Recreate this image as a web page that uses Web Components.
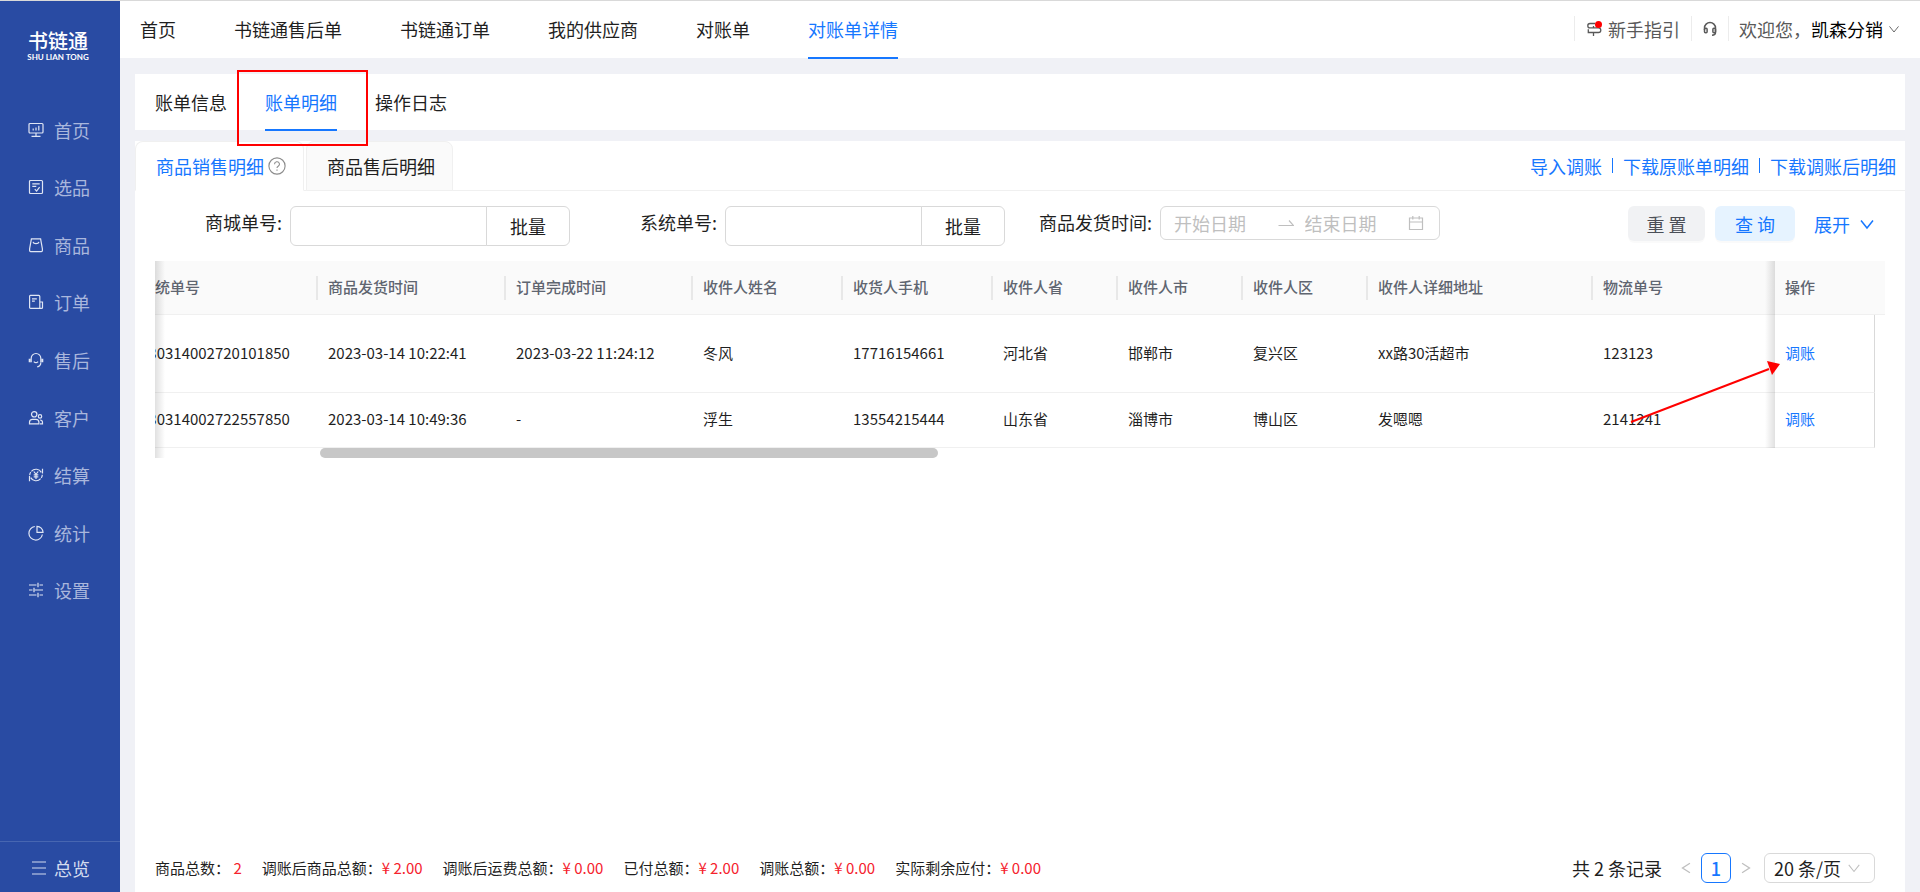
<!DOCTYPE html>
<html lang="zh-CN">
<head>
<meta charset="utf-8">
<title>书链通 - 对账单详情</title>
<style>
  :root { --blue: #1677ff; --ink: #1f1f1f; --line: #d9d9d9; --soft: #f0f0f0; --page: #f0f1f6; --side: #294ba3; }
  body { margin: 0; font-family: "Noto Sans CJK SC", "Noto Sans", sans-serif; font-size: 18px; line-height: 24px; color: var(--ink); }
</style>
</head>
<body>
<bill-app></bill-app>

<script>
const define = (name, html, setup) => customElements.define(name, class extends HTMLElement {
  constructor() {
    super();
    this.attachShadow({ mode: 'open' }).innerHTML = html;
  }
  connectedCallback() { if (setup) setup(this, this.shadowRoot); }
});

const icons = {
  home: '<rect x="1" y="1.500" width="14" height="9.500" rx="1"/><path d="M8 11v3M3.500 14.400h9M5.200 6.600v2M8 5.400v3.200M10.800 3.800v4.800"/>',
  pick: '<rect x="1.500" y="1.500" width="13" height="13" rx="1"/><path d="M4.300 4.800h7.400M4.300 7.400h4M6.800 10.200l1.800 1.900 3-4"/>',
  goods: '<path d="M3.400 1.900h9.200l1.800 10v1.700a1 1 0 0 1-1 1H2.600a1 1 0 0 1-1-1v-1.700zM5 4.800c.6 2.400 5.400 2.400 6 0"/>',
  order: '<path d="M11.800 14.400H2.600a1 1 0 0 1-1-1V2.200a.8.8 0 0 1 .8-.8h8.400a1 1 0 0 1 1 1v12h1.700a1 1 0 0 0 1-1V8h-2.700M4 4.800h4.800M4 7.200h2.800"/>',
  service: '<path d="M3.200 10.200V6.300a4.800 4.800 0 0 1 9.600 0v3.900M12.800 10.400c0 2.600-1.500 4-3.600 4.400M5.800 9.600c1.300 1.300 3 1.300 4.300 0"/><path d="M1.700 6.700v3.600M14.300 6.700v3.600" stroke-width="2"/>',
  client: '<circle cx="6.200" cy="4.300" r="2.700"/><path d="M1.500 13.800v-1.500a3 3 0 0 1 3-3h3.400a3 3 0 0 1 3 3v1.500zM12 13.800h2.500v-1.300a2.500 2.500 0 0 0-2.500-2.500"/><circle cx="12" cy="6.400" r="1.700"/>',
  settle: '<path d="M3.400 4.400a6 6 0 0 1 9.900 1M12.600 11.600a6 6 0 0 1-9.900-1M14.500 1.800v4.700M1.500 9v5.200M1.700 8.300a6 6 0 0 1 1-3.200M14.300 7.700a6 6 0 0 1-1 3.200M5.800 4.500L8 7.300l2.200-2.800M8 7.300v4.600M5.700 7.800h4.600M5.700 9.800h4.600"/>',
  stats: '<path d="M6.800 1.500a6.800 6.800 0 1 0 7.600 8"/><path d="M9 1.300v6h6a6 6 0 0 0-6-6z"/>',
  setup: '<path d="M1 3h7.500M11.500 3H15M10 .8v4.400M1 8h3.500M6.800 8H15M6 5.800v4.400M1 13h7.500M11.500 13H15M10 10.800v4.400"/>',
  lines: '<path d="M1 2h14M1 8h14M1 14h14"/>',
  guide: '<path d="M9 2.500H4a2.200 2.200 0 0 0 0 4.400h8.500a2.300 2.300 0 0 1 0 4.600H2.300V8.300M7.500 11.500V15M7.500 5v1.900"/>',
  headset: '<path d="M2.500 9V7a5.500 5.500 0 0 1 11 0v4.500c0 1.800-1.300 2.600-3.500 2.700"/><rect x="2.500" y="7.300" width="2.600" height="4.500" rx="1"/><rect x="10.900" y="7.300" width="2.600" height="4.500" rx="1"/>',
  down: '<path d="M2 4.500l6 7.500 6-7.500"/>',
  left: '<path d="M12.500 2.500L4 8l8.500 5.500"/>',
  right: '<path d="M3.500 2.500L12 8l-8.500 5.500"/>',
  calendar: '<path d="M1.500 3h13v11.500h-13zM1.500 7h13M4.800 1v3.500M11.200 1v3.500"/>',
  help: '<circle cx="8" cy="8" r="7.200"/><path d="M5.800 6.400a2.200 2.200 0 1 1 3.300 1.900c-.8.500-1.100.8-1.100 1.500M8 11v1.200"/>',
  swap: '<path d="M.5 10.500h15l-4.500-5"/>'
};

define('ui-icon', `
  <style>
    :host { display: inline-block; width: 16px; height: 16px; flex: none; }
    svg { display: block; width: 100%; height: 100%; fill: none; stroke: currentColor; stroke-width: var(--stroke, 1.2); }
  </style>
  <svg viewBox="0 0 16 16" aria-hidden="true"></svg>`,
  (el, root) => { root.querySelector('svg').innerHTML = icons[el.getAttribute('name')] || ''; });

define('side-item', `
  <style>
    :host { display: flex; }
    a { flex: 1; display: flex; align-items: center; gap: 10px; padding-left: 28px; color: #a9b7dd; text-decoration: none; }
    ui-icon { color: #dfe5f4; }
  </style>
  <a href="#"><ui-icon></ui-icon><slot></slot></a>`,
  (el, root) => {
    const old = root.querySelector('ui-icon');
    const icon = document.createElement('ui-icon');
    icon.setAttribute('name', el.getAttribute('icon'));
    old.replaceWith(icon);
  });

define('app-sidebar', `
  <style>
    :host { display: flex; flex-direction: column; width: 120px; flex: none; background: var(--side); }
    .logo { padding: 28px 4px 0 0; text-align: center; color: #fff; height: 72px; box-sizing: border-box; }
    .logo b { display: block; font-size: 20px; line-height: 24px; font-weight: 500; }
    .logo small { display: block; font-size: 8px; line-height: 9px; font-weight: 700; font-family: Lato, sans-serif; }
    nav { display: grid; grid-auto-rows: 1fr; height: 518px; margin-top: 28px; }
    a { margin-top: auto; display: flex; align-items: center; gap: 7px; padding: 1px 0 0 31px; height: 49px; border-top: 1px solid #4766b1; color: #d3dbef; text-decoration: none; }
  </style>
  <div class="logo"><b>书链通</b><small>SHU LIAN TONG</small></div>
  <nav>
    <side-item icon="home">首页</side-item>
    <side-item icon="pick">选品</side-item>
    <side-item icon="goods">商品</side-item>
    <side-item icon="order">订单</side-item>
    <side-item icon="service">售后</side-item>
    <side-item icon="client">客户</side-item>
    <side-item icon="settle">结算</side-item>
    <side-item icon="stats">统计</side-item>
    <side-item icon="setup">设置</side-item>
  </nav>
  <a href="#"><ui-icon name="lines"></ui-icon>总览</a>`);

define('tab-link', `
  <style>
    :host { display: flex; position: relative; }
    a { display: flex; align-items: center; color: inherit; text-decoration: none; border-bottom: 2px solid transparent; }
    :host([active]) a { color: var(--blue); border-bottom-color: var(--blue); }
  </style>
  <a href="#"><slot></slot></a>`);

define('app-header', `
  <style>
    :host { display: flex; justify-content: space-between; height: 57px; padding: 0 20px; background: #fff; }
    nav { display: flex; gap: 58px; }
    tab-link { margin-bottom: -1px; }
    .user { display: flex; align-items: center; height: 25px; margin-top: 15px; color: #595959; }
    .user > * { display: flex; align-items: center; height: 25px; border: 0; border-left: 1px solid #ececec; padding: 0 11px; background: none; font: inherit; color: inherit; box-sizing: border-box; text-decoration: none; }
    .guide { gap: 6px; position: relative; --stroke: 1.3; }
    .guide i { position: absolute; left: 20px; top: 5px; width: 7px; height: 7px; border-radius: 50%; background: #f00; }
    .user .hs { padding: 0 10px; --stroke: 1.5; }
    .user .me { padding: 0 0 0 10px; }
    b { font-weight: inherit; color: #000; }
    .me ui-icon { width: 12px; height: 12px; margin-left: 5px; }
  </style>
  <nav>
    <tab-link>首页</tab-link><tab-link>书链通售后单</tab-link><tab-link>书链通订单</tab-link>
    <tab-link>我的供应商</tab-link><tab-link>对账单</tab-link><tab-link active>对账单详情</tab-link>
  </nav>
  <div class="user">
    <a class="guide" href="#"><ui-icon name="guide"></ui-icon><i></i>新手指引</a>
    <button class="hs" aria-label="客服"><ui-icon name="headset"></ui-icon></button>
    <button class="me">欢迎您，<b>凯森分销</b><ui-icon name="down"></ui-icon></button>
  </div>`);

define('bill-tabs', `
  <style>
    :host { display: flex; gap: 38px; height: 56px; padding: 0 20px; background: #fff; }
    tab-link { margin-bottom: -1px; }
    .mark { position: absolute; left: -28px; top: -4px; width: 127px; height: 72px; border: 2px solid #f00; z-index: 3; pointer-events: none; }
  </style>
  <tab-link>账单信息</tab-link>
  <tab-link active>账单明细<span class="mark"></span></tab-link>
  <tab-link>操作日志</tab-link>`);

define('detail-tabs', `
  <style>
    :host { display: flex; height: 49px; border-bottom: 1px solid var(--soft); }
    button { display: flex; align-items: center; gap: 4px; height: 50px; box-sizing: border-box; font: inherit; color: inherit; border: 1px solid var(--soft); border-radius: 8px 8px 0 0; background: #fafafa; padding: 0 17px 0 20px; margin-right: 2px; }
    button[aria-selected=true] { background: #fff; color: var(--blue); border-bottom-color: #fff; }
    button ui-icon { width: 18px; height: 18px; color: #8c8c8c; --stroke: 1; }
    .links { margin-left: auto; display: flex; align-items: center; gap: 10px; padding-right: 9px; }
    a { color: var(--blue); text-decoration: none; }
    i { width: 1px; height: 15px; background: var(--blue); }
  </style>
  <button role="tab" aria-selected="true">商品销售明细<ui-icon name="help"></ui-icon></button>
  <button role="tab" aria-selected="false">商品售后明细</button>
  <div class="links"><a href="#">导入调账</a><i></i><a href="#">下载原账单明细</a><i></i><a href="#">下载调账后明细</a></div>`);

define('batch-field', `
  <style>
    :host { display: flex; }
    label { width: 147px; text-align: right; padding-top: 4px; margin-right: 8px; flex: none; }
    input { flex: 1; min-width: 0; height: 40px; box-sizing: border-box; border: 1px solid var(--line); border-radius: 6px 0 0 6px; font: inherit; padding: 0 11px; outline: 0; }
    button { width: 84px; height: 40px; margin-left: -1px; border: 1px solid var(--line); border-radius: 0 6px 6px 0; background: #fff; font: inherit; color: inherit; padding: 0; }
  </style>
  <label for="no"><slot></slot>:</label><input id="no" type="text"><button>批量</button>`);

define('range-field', `
  <style>
    :host { display: flex; }
    label { width: 147px; text-align: right; padding-top: 4px; margin-right: 8px; flex: none; white-space: nowrap; }
    .box { flex: 1; min-width: 0; display: flex; align-items: center; height: 34px; box-sizing: border-box; border: 1px solid var(--line); border-radius: 6px; padding: 0 15px 0 13px; color: #bfbfbf; }
    input { flex: 1; min-width: 0; width: 0; border: 0; outline: 0; padding: 0; font: inherit; background: none; }
    input::placeholder { color: #bfbfbf; opacity: 1; }
    .box ui-icon[name=swap] { margin-right: 11px; }
  </style>
  <label for="from"><slot></slot>:</label>
  <div class="box"><input id="from" type="text" placeholder="开始日期"><ui-icon name="swap"></ui-icon><input type="text" placeholder="结束日期" aria-label="结束日期"><ui-icon name="calendar"></ui-icon></div>`);

define('bill-filter', `
  <style>
    :host { display: grid; grid-template-columns: repeat(4, minmax(0, 1fr)); padding: 15px 30px 15px 0; }
    .acts { display: flex; justify-content: flex-end; align-items: flex-start; gap: 10px; }
    button { height: 35px; border: 0; border-radius: 6px; font: inherit; padding: 0; box-shadow: 0 2px 0 rgba(0,0,0,.02); }
    .reset { width: 77px; background: #f1f2f4; color: #4b4f57; }
    .query { width: 80px; background: #e6f3ff; color: var(--blue); }
    .more { display: flex; align-items: center; gap: 9px; background: none; color: var(--blue); margin-left: 9px; box-shadow: none; --stroke: 1.5; }
  </style>
  <batch-field>商城单号</batch-field>
  <batch-field>系统单号</batch-field>
  <range-field>商品发货时间</range-field>
  <div class="acts"><button class="reset">重 置</button><button class="query">查 询</button><button class="more">展开<ui-icon name="down"></ui-icon></button></div>`);

define('bill-table', `
  <style>
    :host { display: block; position: relative; margin: 0 20px; font-size: 15px; }
    .view { overflow: hidden; position: relative; padding-bottom: 10px; display: flex; justify-content: flex-end; }
    .head { position: absolute; right: 0; top: 0; width: 10px; height: 53px; background: #fafafa; border-bottom: 1px solid var(--soft); }
    table { border-collapse: separate; border-spacing: 0; table-layout: fixed; width: calc(100% + 15px); flex: none; margin-right: 10px; }
    th, td { text-align: left; padding: 0 0 2px 10px; border-bottom: 1px solid var(--soft); white-space: nowrap; box-sizing: border-box; }
    th { height: 54px; background: linear-gradient(#e8e8e8, #e8e8e8) right center / 2px 24px no-repeat #fafafa; color: #5f6570; font-weight: 500; }
    th:nth-last-child(-n+2) { background: #fafafa; }
    td { height: 55px; }
    tr.tall td { height: 78px; }
    td:last-child { border-right: 1px solid var(--line); }
    a { color: var(--blue); text-decoration: none; }
    .near, .far { position: absolute; top: 0; width: 10px; pointer-events: none; }
    .near { left: 0; bottom: 0; background: linear-gradient(90deg, rgba(0,0,0,.12), transparent); }
    .far { right: 110px; bottom: 10px; background: linear-gradient(270deg, rgba(0,0,0,.12), transparent); }
    .thumb { position: absolute; left: 165px; bottom: 0; width: 618px; height: 10px; border-radius: 5px; background: #c7c7c7; }
    .arrow { position: absolute; right: 104px; top: 99px; width: 154px; height: 66px; overflow: visible; z-index: 3; pointer-events: none; }
  </style>
  <div class="view">
    <table>
      <colgroup><col style="width:188px"><col style="width:188px"><col style="width:187px"><col style="width:150px"><col style="width:150px"><col style="width:125px"><col style="width:125px"><col style="width:125px"><col style="width:225px"><col><col style="width:100px"></colgroup>
      <thead><tr><th>系统单号</th><th>商品发货时间</th><th>订单完成时间</th><th>收件人姓名</th><th>收货人手机</th><th>收件人省</th><th>收件人市</th><th>收件人区</th><th>收件人详细地址</th><th>物流单号</th><th>操作</th></tr></thead>
      <tbody>
        <tr class="tall"><td>230314002720101850</td><td>2023-03-14 10:22:41</td><td>2023-03-22 11:24:12</td><td>冬风</td><td>17716154661</td><td>河北省</td><td>邯郸市</td><td>复兴区</td><td>xx路30活超市</td><td>123123</td><td><a href="#">调账</a></td></tr>
        <tr><td>230314002722557850</td><td>2023-03-14 10:49:36</td><td>-</td><td>浮生</td><td>13554215444</td><td>山东省</td><td>淄博市</td><td>博山区</td><td>发嗯嗯</td><td>2141241</td><td><a href="#">调账</a></td></tr>
      </tbody>
    </table>
    <div class="head"></div><div class="near"></div><div class="far"></div><div class="thumb"></div>
  </div>
  <svg class="arrow" viewBox="0 0 154 66" aria-hidden="true"><path d="M4 62L142 9" stroke="#f00" stroke-width="2"/><path d="M153 4L140 1l5 14z" fill="#f00"/></svg>`);

define('bill-totals', `
  <style>
    :host { display: flex; gap: 20px; font-size: 15px; }
    em { font-style: normal; color: #f5222d; }
  </style>
  <span>商品总数： <em>2</em></span><span>调账后商品总额：<em>¥ 2.00</em></span><span>调账后运费总额：<em>¥ 0.00</em></span><span>已付总额：<em>¥ 2.00</em></span><span>调账总额：<em>¥ 0.00</em></span><span>实际剩余应付：<em>¥ 0.00</em></span>`);

define('bill-pager', `
  <style>
    :host { display: flex; align-items: center; }
    button { height: 30px; border: 0; background: none; padding: 0; font: inherit; display: flex; align-items: center; justify-content: center; color: #bfbfbf; }
    .step { width: 30px; --stroke: 1.5; }
    .step ui-icon { width: 14px; height: 14px; }
    .prev { margin-left: 9px; }
    .cur { width: 30px; box-sizing: border-box; border: 1px solid var(--blue); border-radius: 6px; color: var(--blue); font-weight: 500; }
    .size { display: flex; align-items: center; margin-left: 3px; color: #bfbfbf; }
    select { appearance: none; width: 111px; height: 30px; box-sizing: border-box; border: 1px solid var(--line); border-radius: 6px; background: none; font: inherit; color: var(--ink); padding: 0 9px; }
    .size ui-icon { width: 14px; height: 14px; margin-left: -28px; margin-right: 14px; pointer-events: none; }
  </style>
  <span>共 2 条记录</span>
  <button class="step prev" aria-label="上一页"><ui-icon name="left"></ui-icon></button>
  <button class="cur">1</button>
  <button class="step" aria-label="下一页"><ui-icon name="right"></ui-icon></button>
  <div class="size"><select aria-label="每页条数"><option>20 条/页</option></select><ui-icon name="down"></ui-icon></div>`);

define('bill-app', `
  <style>
    :host { display: flex; min-height: 100vh; box-sizing: border-box; border-top: 1px solid var(--line); background: var(--page); }
    .main { flex: 1; min-width: 0; display: flex; flex-direction: column; }
    bill-tabs { margin: 16px 15px 11px; }
    section { flex: 1; margin: 0 15px; background: #fff; display: flex; flex-direction: column; }
    footer { margin-top: auto; display: flex; justify-content: space-between; align-items: center; padding: 0 30px 9px 20px; }
  </style>
  <app-sidebar></app-sidebar>
  <div class="main">
    <app-header></app-header>
    <bill-tabs></bill-tabs>
    <section>
      <detail-tabs></detail-tabs>
      <bill-filter></bill-filter>
      <bill-table></bill-table>
      <footer><bill-totals></bill-totals><bill-pager></bill-pager></footer>
    </section>
  </div>`);
</script>
</body>
</html>
